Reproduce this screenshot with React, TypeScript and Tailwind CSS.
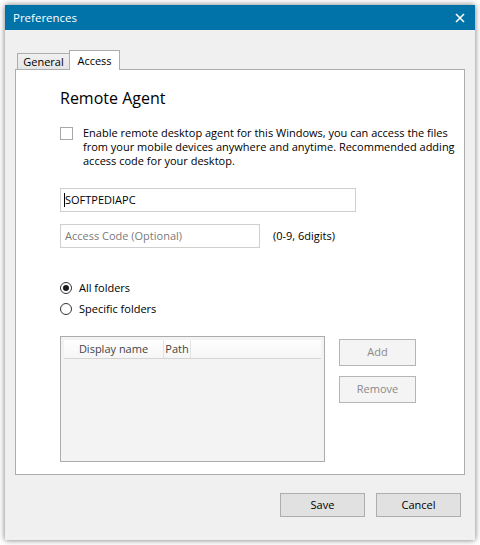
import React from "react";

const font = { fontFamily: '"Open Sans", "Noto Sans", sans-serif' };

export default function App() {
  return (
    <div className="w-[480px] h-[545px] bg-white p-[5px]" style={font}>
      <div className="w-[470px] h-[535px] flex flex-col bg-[#f0f0f0] shadow-[0_0_6px_rgba(0,0,0,0.55)]">
        {/* Title bar */}
        <div className="h-[25px] bg-[#0173a9] flex items-center justify-between pl-[8px] pr-[10px] text-white text-[11.5px]">
          <span>Preferences</span>
          <svg width="10" height="10" viewBox="0 0 10 10">
            <path d="M1 1 L9 9 M9 1 L1 9" stroke="white" strokeWidth="1.6" />
          </svg>
        </div>
        {/* Body */}
        <div className="flex-1 flex flex-col px-[10px] pt-[19px]">
          {/* Tabs */}
          <div className="flex items-end h-[20px] pl-[2px] text-[11px] text-[#000] relative z-10">
            <div className="h-[16px] w-[53px] border border-b-0 border-[#adadad] bg-gradient-to-b from-[#f0f0f0] to-[#e5e5e5] flex items-center justify-center leading-none">
              General
            </div>
            <div className="h-[20px] w-[51px] -ml-[1px] -mb-[1px] border border-b-0 border-[#adadad] bg-white flex items-center justify-center leading-none">
              Access
            </div>
          </div>
          {/* Panel */}
          <div className="h-[406px] border border-[#adadad] bg-white pl-[44px] pt-[18px] text-[11px] text-[#000]">
            <div className="h-[20px] text-[16px] leading-[20px]">Remote Agent</div>
            <div className="mt-[18px] flex">
              <div className="mt-[1px] w-[13px] h-[13px] border border-[#a8a8a8] bg-white shrink-0" />
              <div className="ml-[10px] leading-[14px]">
                <div className="whitespace-nowrap">Enable remote desktop agent for this Windows, you can access the files</div>
                <div className="whitespace-nowrap">from your mobile devices anywhere and anytime. Recommended adding</div>
                <div className="whitespace-nowrap">access code for your desktop.</div>
              </div>
            </div>
            <div className="mt-[20px] w-[296px] h-[24px] border border-[#cfcfcf] flex items-center pl-[3px]">
              <span className="w-[1px] h-[14px] bg-black" />
              <span>SOFTPEDIAPC</span>
            </div>
            <div className="mt-[12px] flex items-center">
              <div className="w-[200px] h-[24px] border border-[#cfcfcf] flex items-center pl-[4px] text-[#7a7a7a]">
                Access Code (Optional)
              </div>
              <span className="ml-[13px]">(0-9, 6digits)</span>
            </div>
            <div className="mt-[30px] h-[20px] flex items-center">
              <div className="w-[12px] h-[12px] rounded-full border border-[#333] flex items-center justify-center">
                <div className="w-[6px] h-[6px] rounded-full bg-[#1a1a1a]" />
              </div>
              <span className="ml-[7px]">All folders</span>
            </div>
            <div className="mt-[1px] h-[20px] flex items-center">
              <div className="w-[12px] h-[12px] rounded-full border border-[#333]" />
              <span className="ml-[7px]">Specific folders</span>
            </div>
            <div className="mt-[17px] flex">
              <div className="w-[265px] h-[126px] border border-[#acacac] bg-[#f3f3f3] p-[3px]">
                <div className="h-[19px] flex bg-gradient-to-b from-white to-[#f6f6f6] border-b border-[#d5d5d5] text-[#444]">
                  <div className="w-[100px] border-r border-[#e3e3e3] flex items-center justify-center">Display name</div>
                  <div className="w-[27px] border-r border-[#e3e3e3] flex items-center justify-center">Path</div>
                </div>
              </div>
              <div className="ml-[14px] mt-[3px] flex flex-col gap-[10px]">
                <div className="w-[77px] h-[27px] border border-[#b5b5b5] bg-[#f4f4f4] text-[#8a8a8a] flex items-center justify-center">Add</div>
                <div className="w-[77px] h-[27px] border border-[#b5b5b5] bg-[#f4f4f4] text-[#8a8a8a] flex items-center justify-center">Remove</div>
              </div>
            </div>
          </div>
          {/* Footer buttons */}
          <div className="mt-[18px] flex justify-end gap-[11px] pr-[4px] text-[11px]">
            <div className="w-[85px] h-[24px] border border-[#adadad] bg-[#e1e1e1] flex items-center justify-center">Save</div>
            <div className="w-[85px] h-[24px] border border-[#adadad] bg-[#e1e1e1] flex items-center justify-center">Cancel</div>
          </div>
        </div>
      </div>
    </div>
  );
}
